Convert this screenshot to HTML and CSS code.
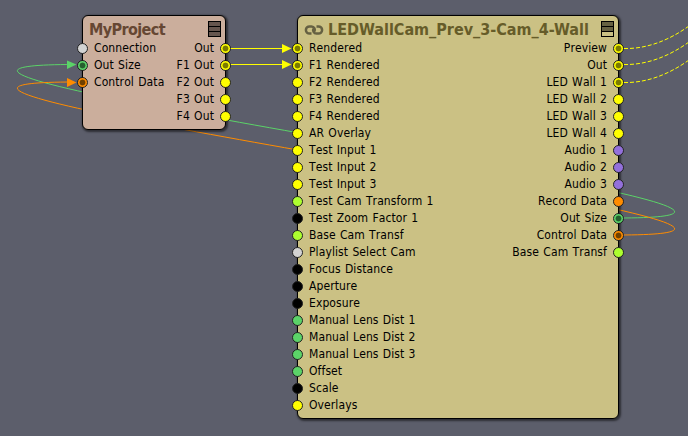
FILE: index.html
```html
<!DOCTYPE html>
<html lang="en">
<head>
    <meta charset="UTF-8">
    <meta name="viewport" content="width=device-width, initial-scale=1.0">
    <title>MyProject</title>
    <link rel="stylesheet" href="styles.css">
</head>
<body>
    <div class="canvas">
        <svg class="wires" width="688" height="436">
            <!-- feedback connections -->
            <path class="wire green" d="M618 218 C943 218 -251 64.500 74 64.500"/>
            <path class="wire orange" d="M618 235 C943 235 -251 82 74 82"/>
            <!-- project outputs -->
            <path class="wire yellow" d="M226 48.5H290M226 64.5H290"/>
            <!-- outputs to the next node -->
            <path class="wire yellow dashed" d="M624 48.5C646 49 668 41 689 26"/>
            <path class="wire yellow dashed" d="M624 64.5C646 65 668 57 689 42"/>
            <path class="wire yellow dashed" d="M624 82.5C646 83 668 75 689 60"/>
            <path class="arrow green" d="M67 60.5L76.500 64.500L67 69z"/>
            <path class="arrow orange" d="M67 78L76.500 82.500L67 87z"/>
            <path class="arrow yellow" d="M282 44L291.500 48.500L282 53z"/>
            <path class="arrow yellow" d="M282 60L291.500 64.500L282 69z"/>
        </svg>

        <div class="node project">
            <div class="header">
                <span class="title">MyProject</span>
                <div class="menu"><i></i><i></i><i></i></div>
            </div>
            <div class="ports">
                <div class="inputs">
                    <div class="port gray">Connection</div>
                    <div class="port green linked">Out Size</div>
                    <div class="port orange linked">Control Data</div>
                </div>
                <div class="outputs">
                    <div class="port yellow linked">Out</div>
                    <div class="port yellow linked">F1 Out</div>
                    <div class="port yellow">F2 Out</div>
                    <div class="port yellow">F3 Out</div>
                    <div class="port yellow">F4 Out</div>
                </div>
            </div>
        </div>

        <div class="node wall">
            <div class="header">
                <svg class="link" width="20" height="12" viewBox="0 0 20 12">
                    <path d="M7.500 9.600H5.500A3.600 3.600 0 0 1 5.500 2.400H7.500A3.400 3.400 0 0 1 10.200 7.800M12.500 2.400H14.500A3.600 3.600 0 0 1 14.500 9.600H12.500A3.400 3.400 0 0 1 9.800 4.200"/>
                </svg>
                <span class="title">LEDWallCam_Prev_3-Cam_4-Wall</span>
                <div class="menu"><i></i><i></i><i></i></div>
            </div>
            <div class="ports">
                <div class="inputs">
                    <div class="port yellow linked">Rendered</div>
                    <div class="port yellow linked">F1 Rendered</div>
                    <div class="port yellow">F2 Rendered</div>
                    <div class="port yellow">F3 Rendered</div>
                    <div class="port yellow">F4 Rendered</div>
                    <div class="port yellow">AR Overlay</div>
                    <div class="port yellow">Test Input 1</div>
                    <div class="port yellow">Test Input 2</div>
                    <div class="port yellow">Test Input 3</div>
                    <div class="port lime">Test Cam Transform 1</div>
                    <div class="port black">Test Zoom Factor 1</div>
                    <div class="port lime">Base Cam Transf</div>
                    <div class="port gray">Playlist Select Cam</div>
                    <div class="port black">Focus Distance</div>
                    <div class="port black">Aperture</div>
                    <div class="port black">Exposure</div>
                    <div class="port green">Manual Lens Dist 1</div>
                    <div class="port green">Manual Lens Dist 2</div>
                    <div class="port green">Manual Lens Dist 3</div>
                    <div class="port green">Offset</div>
                    <div class="port black">Scale</div>
                    <div class="port yellow">Overlays</div>
                </div>
                <div class="outputs">
                    <div class="port yellow linked">Preview</div>
                    <div class="port yellow linked">Out</div>
                    <div class="port yellow linked">LED Wall 1</div>
                    <div class="port yellow">LED Wall 2</div>
                    <div class="port yellow">LED Wall 3</div>
                    <div class="port yellow">LED Wall 4</div>
                    <div class="port purple">Audio 1</div>
                    <div class="port purple">Audio 2</div>
                    <div class="port purple">Audio 3</div>
                    <div class="port orange">Record Data</div>
                    <div class="port green linked">Out Size</div>
                    <div class="port orange linked">Control Data</div>
                    <div class="port lime">Base Cam Transf</div>
                </div>
            </div>
        </div>
    </div>
</body>
</html>
```
FILE: styles.css
```css
body {
    margin: 0;
    background-color: #5c5e6b;
    font-family: "DejaVu Sans Condensed", "DejaVu Sans", sans-serif;
    font-stretch: condensed;
    font-size: 12px;
    color: #000;
}

.canvas {
    position: relative;
    width: 688px;
    height: 436px;
    overflow: hidden;
}

.wires {
    position: absolute;
    top: 0;
    left: 0;
}

.yellow { --c: #ffff00; --dot: #7a7a00; }
.green { --c: #5bd368; --dot: #25602e; }
.orange { --c: #ff8c00; --dot: #704000; }
.lime { --c: #adff2f; }
.gray { --c: #d3d3d3; }
.purple { --c: #9370db; }
.black { --c: #000; }

.wire {
    fill: none;
    stroke: var(--c);
    stroke-width: 1;
}

.dashed {
    stroke-dasharray: 4 2;
}

.arrow {
    fill: var(--c);
}

.node {
    position: absolute;
    top: 15px;
    box-sizing: border-box;
    border: 1px solid #000;
    border-radius: 6px;
    box-shadow: 1px 1px 2px 1px rgba(0, 0, 0, 0.5);
}

.project {
    left: 82px;
    width: 144px;
    height: 115px;
    background-color: #cbae9c;
    --title: #664733;
    --menu: #66564e;
}

.wall {
    left: 297px;
    width: 322px;
    height: 404px;
    background-color: #cbc184;
    --title: #665c29;
    --menu: #666142;
}

.header {
    display: flex;
    align-items: center;
    height: 24px;
    padding: 0 4px 0 6px;
}

.title {
    flex: 1;
    padding-top: 3px;
    font-size: 16px;
    font-weight: bold;
    line-height: 20px;
    white-space: nowrap;
    color: var(--title);
}

.project .title {
    letter-spacing: -0.6px;
}

.link {
    margin: 4px 4px 0 0;
    fill: none;
    stroke: var(--menu);
    stroke-width: 2.5;
}

.menu {
    display: flex;
    flex-direction: column;
    gap: 1px;
    margin-top: 2px;
    width: 11px;
    padding: 1px;
    background-color: #000;
}

.menu i {
    height: 4px;
    background-color: var(--menu);
}

.wall .menu i:last-child {
    background-color: #cbc184;
}

.ports {
    display: flex;
    justify-content: space-between;
    margin: 0 -6px;
}

.port {
    display: flex;
    align-items: center;
    gap: 6px;
    height: 17px;
    line-height: 17px;
    font-kerning: none;
    letter-spacing: 0.1px;
    word-spacing: 0.7px;
    white-space: nowrap;
}

.outputs .port {
    flex-direction: row-reverse;
}

.port::before {
    content: "";
    box-sizing: border-box;
    width: 11px;
    height: 11px;
    border: 1px solid #222;
    border-radius: 50%;
    background: var(--c);
}

.linked::before {
    background: radial-gradient(circle, var(--dot) 2.6px, var(--c) 3.3px);
}
```
